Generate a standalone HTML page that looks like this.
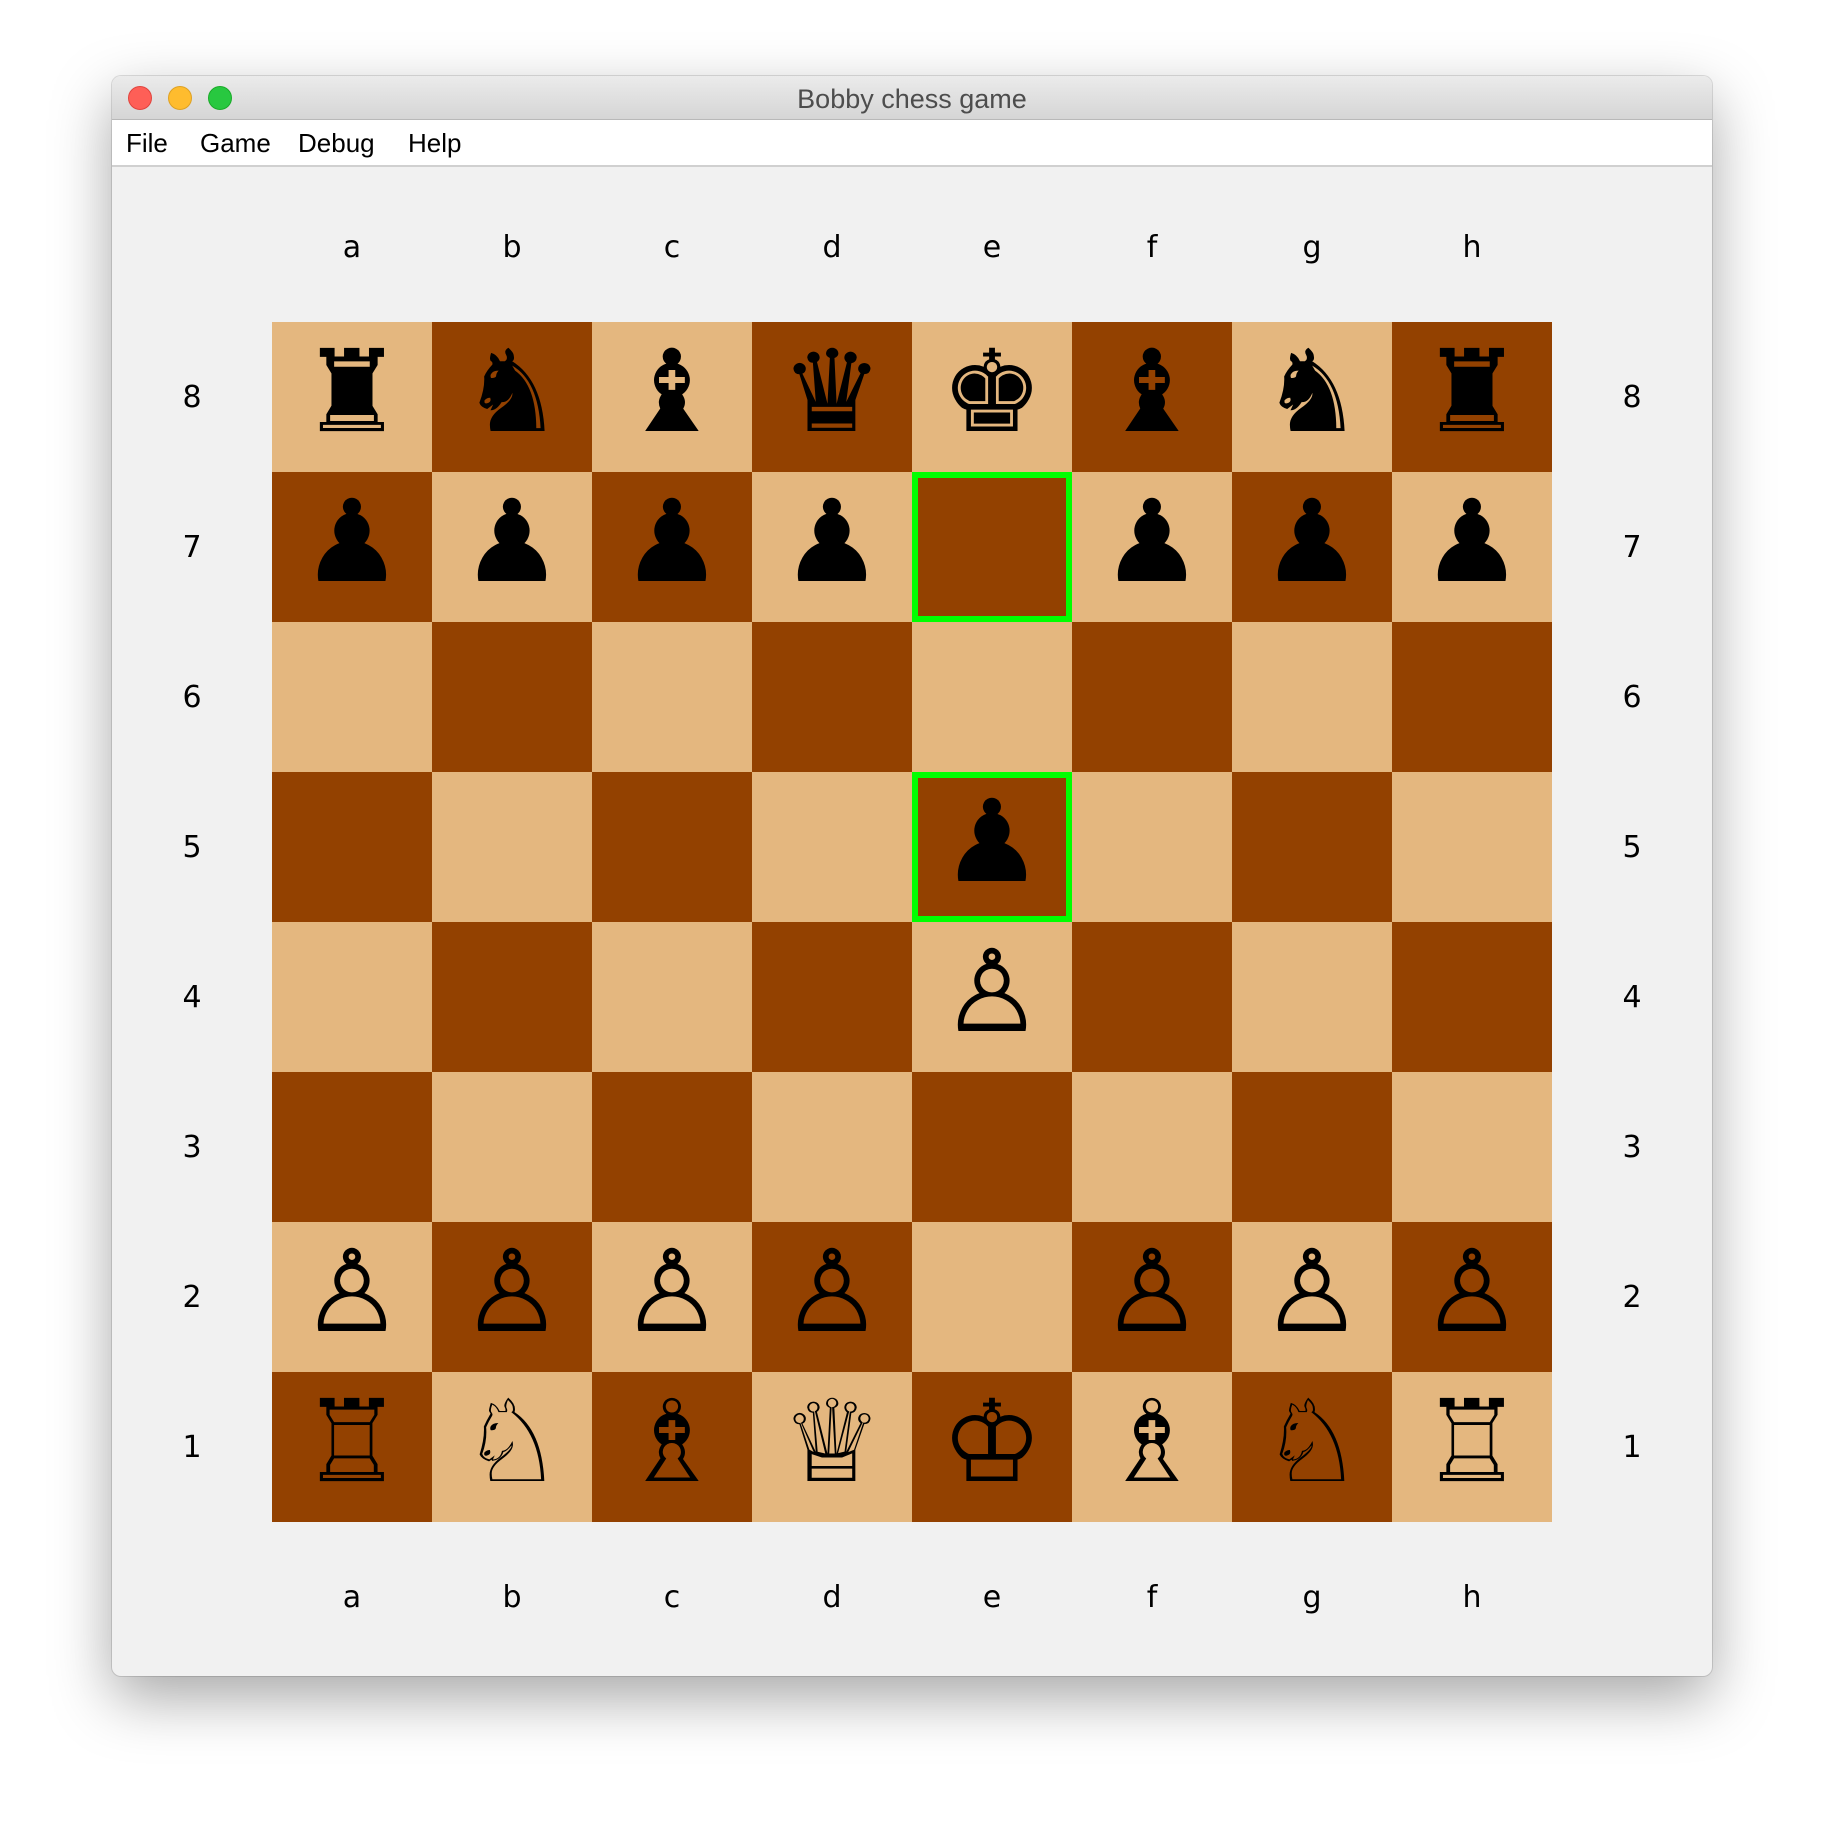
<!DOCTYPE html>
<html><head><meta charset="utf-8"><style>
html,body{margin:0;padding:0;background:#fff;width:1824px;height:1824px;overflow:hidden;font-family:"Liberation Sans","DejaVu Sans",sans-serif}
.win{position:absolute;left:112px;top:76px;width:1600px;height:1600px;background:#f1f1f1;border-radius:9px;box-shadow:0 22px 60px rgba(0,0,0,0.35),0 0 0 1px rgba(0,0,0,0.12);overflow:hidden}
.title{position:absolute;left:0;top:0;width:1600px;height:43px;background:linear-gradient(#ebebeb,#d5d5d5);border-bottom:1px solid #b8b8b8}
.title .t{position:absolute;left:0;right:0;top:8px;text-align:center;font-size:27px;color:#4d4d4d}
.dot{position:absolute;top:10px;width:24px;height:24px;border-radius:50%}
.menu{position:absolute;left:0;top:44px;width:1600px;height:45px;background:#fff;border-bottom:2px solid #d0d0d0}
.menu span{position:absolute;top:8px;font-size:26px;color:#000}
.sq{position:absolute;width:160px;height:150px;text-align:center;font-family:"DejaVu Sans",sans-serif;font-size:114px;line-height:140px;color:#000}
.L{background:#e4b77f}.D{background:#934100}
.hl{box-shadow:inset 0 0 0 6px #00ff00}
.lab{position:absolute;font-size:30px;color:#000;width:60px;text-align:center;font-family:"DejaVu Sans",sans-serif}
</style></head><body>
<div class="win">
<div class="title"><div class="dot" style="left:16px;background:#fe5f57;border:1px solid #e0443e;width:22px;height:22px"></div><div class="dot" style="left:56px;background:#febc2e;border:1px solid #dea123;width:22px;height:22px"></div><div class="dot" style="left:96px;background:#28c840;border:1px solid #1aab29;width:22px;height:22px"></div><div class="t">Bobby chess game</div></div>
<div class="menu"><span style="left:14px">File</span><span style="left:88px">Game</span><span style="left:186px">Debug</span><span style="left:296px">Help</span></div>
</div>
<div id="b"></div>
<script>
var b=document.getElementById('b'),h='';
var rows=["♜♞♝♛♚♝♞♜","♟♟♟♟ ♟♟♟","        ","    ♟   ","    ♙   ","        ","♙♙♙♙ ♙♙♙","♖♘♗♕♔♗♘♖"];
var f="abcdefgh";
for(var r=0;r<8;r++)for(var c=0;c<8;c++){
var cl=((r+c)%2==0)?'L':'D';
if((r==1||r==3)&&c==4)cl+=' hl';
var ch=rows[r][c];if(ch==' ')ch='';
h+='<div class="sq '+cl+'" style="left:'+(272+c*160)+'px;top:'+(322+r*150)+'px">'+ch+'</div>';}
for(var i=0;i<8;i++){
h+='<div class="lab" style="left:'+(322+i*160)+'px;top:230px">'+f[i]+'</div>';
h+='<div class="lab" style="left:'+(322+i*160)+'px;top:1580px">'+f[i]+'</div>';
h+='<div class="lab" style="left:162px;top:'+(380+i*150)+'px">'+(8-i)+'</div>';
h+='<div class="lab" style="left:1602px;top:'+(380+i*150)+'px">'+(8-i)+'</div>';}
b.innerHTML=h;
</script>
</body></html>
